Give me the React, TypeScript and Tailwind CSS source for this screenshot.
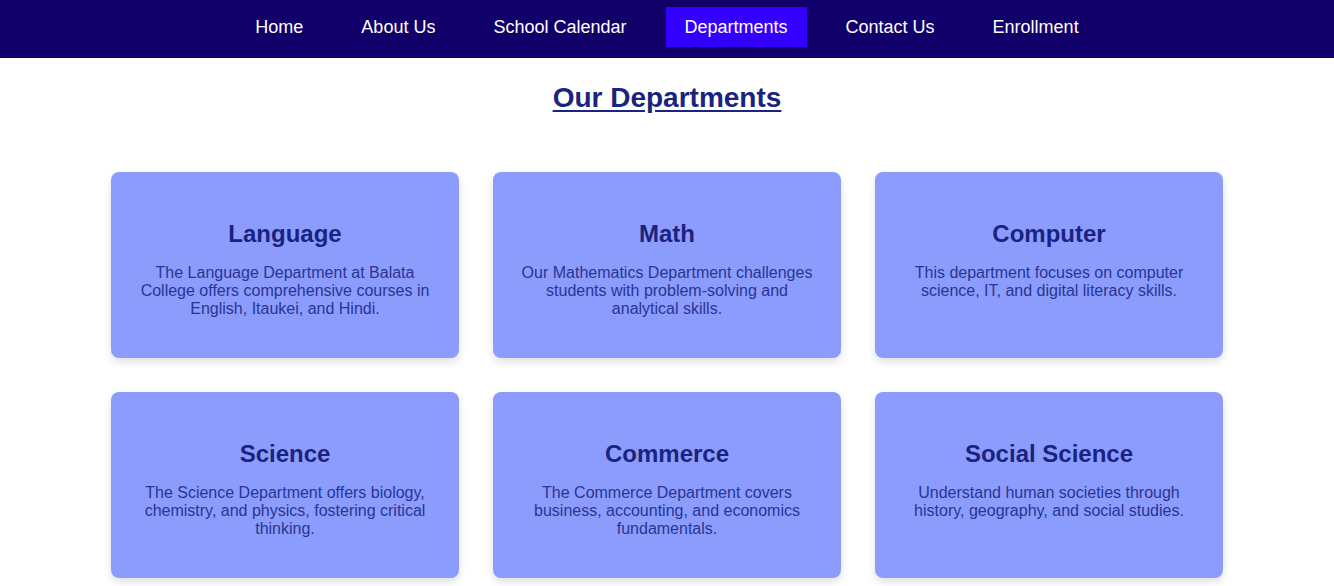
import React from "react";

const links = [
  "Home",
  "About Us",
  "School Calendar",
  "Departments",
  "Contact Us",
  "Enrollment",
];

const departments = [
  {
    name: "Language",
    text: "The Language Department at Balata College offers comprehensive courses in English, Itaukei, and Hindi.",
  },
  {
    name: "Math",
    text: "Our Mathematics Department challenges students with problem-solving and analytical skills.",
  },
  {
    name: "Computer",
    text: "This department focuses on computer science, IT, and digital literacy skills.",
  },
  {
    name: "Science",
    text: "The Science Department offers biology, chemistry, and physics, fostering critical thinking.",
  },
  {
    name: "Commerce",
    text: "The Commerce Department covers business, accounting, and economics fundamentals.",
  },
  {
    name: "Social Science",
    text: "Understand human societies through history, geography, and social studies.",
  },
];

const App: React.FC = () => {
  return (
    <div className="min-h-screen bg-white font-['Liberation_Sans',Arial,sans-serif]">
      <nav className="bg-[#12006a] pt-[7px] pb-[11px]">
        <ul className="flex justify-center">
          {links.map((link) => (
            <li key={link} className="mx-[10px]">
              <a
                href="#"
                className={`block px-[19px] py-[10px] text-[18px] leading-[20px] text-white ${
                  link === "Departments" ? "bg-[#3300ff]" : ""
                }`}
              >
                {link}
              </a>
            </li>
          ))}
        </ul>
      </nav>

      <h2 className="mt-[24px] text-center text-[28px] leading-[32px] font-bold text-[#1a237e] underline underline-offset-[3px]">
        Our Departments
      </h2>

      <div className="mx-auto mt-[58px] grid w-[1112px] grid-cols-3 gap-x-[34px] gap-y-[34px]">
        {departments.map((dept) => (
          <div
            key={dept.name}
            className="rounded-lg bg-[#8c9cfc] px-5 pt-[48px] pb-[40px] text-center shadow-[0_4px_8px_rgba(0,0,0,0.12)]"
          >
            <h3 className="text-[24px] leading-[28px] font-bold text-[#1a237e]">
              {dept.name}
            </h3>
            <p className="mt-[16px] text-[16px] leading-[18px] text-[#283593]">
              {dept.text}
            </p>
          </div>
        ))}
      </div>
    </div>
  );
};

export default App;
